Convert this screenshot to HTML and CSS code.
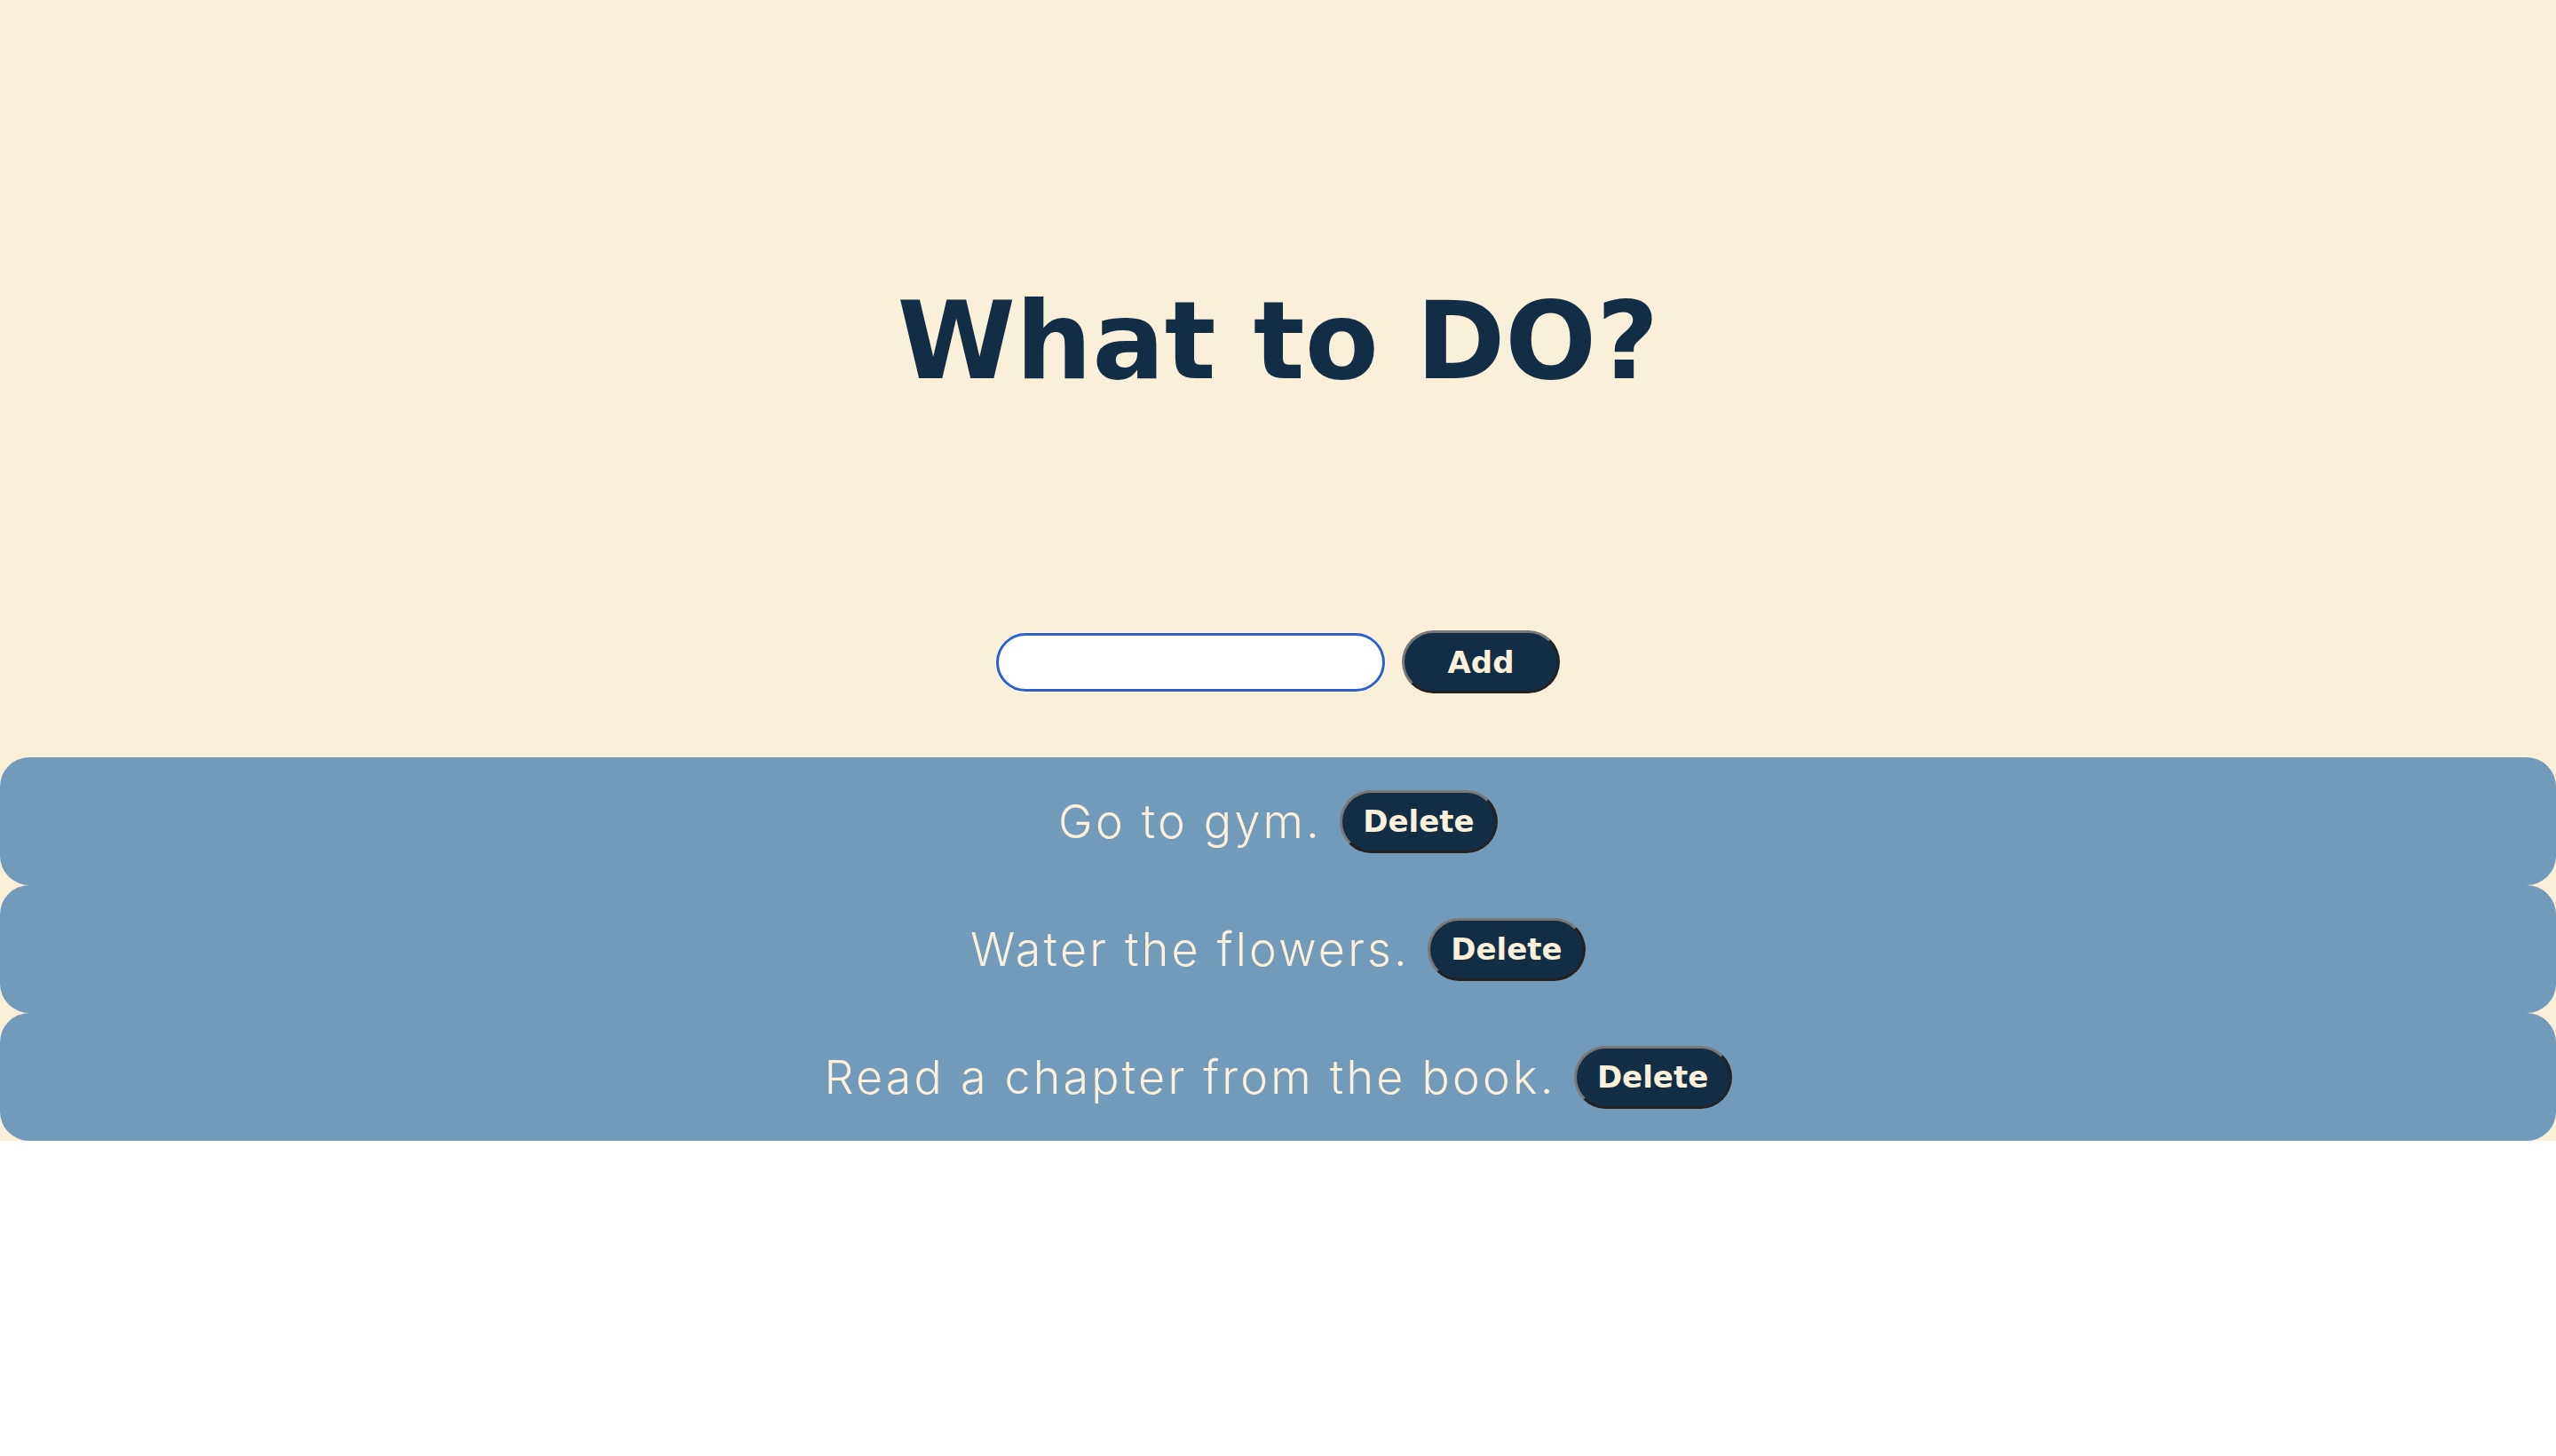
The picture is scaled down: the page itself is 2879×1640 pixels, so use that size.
FILE: index.html
```html
<!DOCTYPE html>
<html lang="en">
<head>
<meta charset="utf-8">
<title>What to DO?</title>
<link rel="stylesheet" href="styles.css">
</head>
<body>
<main class="app">
  <h1 class="title">What to DO?</h1>
  <form class="add-form">
    <input class="task-input" type="text" aria-label="New task">
    <button class="btn" type="button">Add</button>
  </form>
  <ul class="tasks">
    <li class="task"><span class="task-text">Go to gym.</span><button class="btn" type="button">Delete</button></li>
    <li class="task"><span class="task-text">Water the flowers.</span><button class="btn" type="button">Delete</button></li>
    <li class="task"><span class="task-text">Read a chapter from the book.</span><button class="btn" type="button">Delete</button></li>
  </ul>
</main>
</body>
</html>
```

FILE: styles.css
```css
html, body {
  margin: 0;
  padding: 0;
  background: #ffffff;
}

.app {
  background: #faf0da;
  padding-top: 324px;
  display: flex;
  flex-direction: column;
  align-items: stretch;
}

.title {
  margin: 0 0 265px;
  text-align: center;
  font-family: "DejaVu Sans", sans-serif;
  font-weight: 700;
  font-size: 121px;
  line-height: 1;
  color: #122d46;
}

.add-form {
  display: flex;
  justify-content: center;
  align-items: center;
  gap: 19px;
  margin: 0 0 72px;
}

.task-input {
  box-sizing: border-box;
  width: 438px;
  height: 66px;
  border: 3px solid #2d61c9;
  border-radius: 33px;
  background: #ffffff;
  box-shadow: 0 0 0 1px #ffffff;
  outline: none;
  padding: 0 24px;
  font-family: "Inter", sans-serif;
  font-size: 30px;
}

.btn {
  box-sizing: border-box;
  width: 178px;
  height: 71px;
  border-radius: 36px;
  border: 3px solid;
  border-color: #787878 #222222 #222222 #787878;
  background: #122d46;
  color: #fbf0da;
  font-family: "DejaVu Sans", sans-serif;
  font-weight: 700;
  font-size: 34px;
  padding: 0;
  cursor: pointer;
}

.tasks {
  list-style: none;
  margin: 0;
  padding: 0;
}

.task {
  height: 144px;
  display: flex;
  justify-content: center;
  align-items: center;
  gap: 20px;
  background: #729bbb;
  border-radius: 33px;
}

.task-text {
  font-family: "Inter", sans-serif;
  font-weight: 300;
  font-size: 52px;
  letter-spacing: 3.2px;
  color: #fbf0da;
}
```
